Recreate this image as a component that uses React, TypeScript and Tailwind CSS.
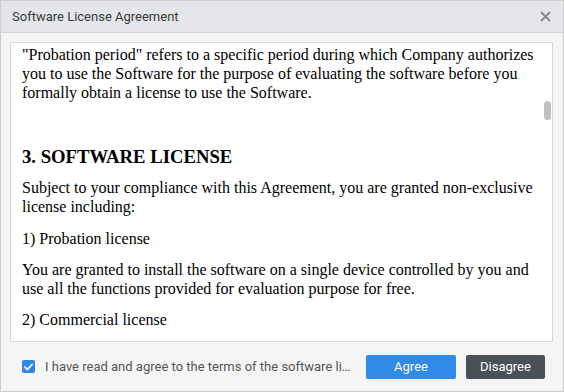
import React from "react";

const sans = "font-['Roboto','Noto_Sans',sans-serif]";

// Check mark for the agreement checkbox
const CheckIcon = () => (
  <svg width="9" height="8" viewBox="0 0 9 8" fill="none">
    <path d="M1 4.2L3.4 6.5L8 1.5" stroke="white" strokeWidth="1.8" strokeLinecap="round" strokeLinejoin="round" />
  </svg>
);

const CloseIcon = () => (
  <svg width="11" height="11" viewBox="0 0 11 11" fill="none">
    <path d="M1 1L10 10M10 1L1 10" stroke="#8a8a8a" strokeWidth="1.8" />
  </svg>
);

export default function App() {
  return (
    <div className="w-[564px] h-[392px] flex flex-col border border-[#cdcdcd] bg-[#f5f5f5] overflow-hidden">
      {/* Title bar */}
      <div className="h-[32px] shrink-0 flex items-center justify-between pl-[11px] pr-[12px] bg-[#e4e6ea] border-b border-[#d4d4d4]">
        <span className={`${sans} text-[13px] text-[#3a3a3a]`}>Software License Agreement</span>
        <CloseIcon />
      </div>

      {/* License text */}
      <div className="relative mt-[9px] ml-[9px] mr-[10px] h-[300px] shrink-0 bg-white border border-[#d9d9d9] overflow-hidden">
        <div className="pl-[11px] pr-[16px] pt-[2px] font-['Liberation_Serif','Times_New_Roman',serif] text-[16px] leading-[19px] text-black">
          <p>
            "Probation period" refers to a specific period during which Company authorizes you to use the Software
            for the purpose of evaluating the software before you formally obtain a license to use the Software.
          </p>
          <h2 className="mt-[44px] text-[18.7px] leading-[22px] font-bold">3. SOFTWARE LICENSE</h2>
          <p className="mt-[10px]">
            Subject to your compliance with this Agreement, you are granted non-exclusive license including:
          </p>
          <p className="mt-[13px]">1) Probation license</p>
          <p className="mt-[12px]">
            You are granted to install the software on a single device controlled by you and use all the functions
            provided for evaluation purpose for free.
          </p>
          <p className="mt-[12px]">2) Commercial license</p>
        </div>
        {/* scrollbar thumb */}
        <div className="absolute left-[533px] top-[58px] w-[7px] h-[19px] rounded-full bg-[#c1c1c1]" />
      </div>

      {/* Footer */}
      <div className="flex-1 flex items-center pl-[21px] pr-[18px]">
        <div className="w-[13px] h-[13px] rounded-[2px] bg-[#2f87e6] flex items-center justify-center shrink-0">
          <CheckIcon />
        </div>
        <span className={`${sans} ml-[10px] w-[312px] truncate text-[13px] text-[#555]`}>
          I have read and agree to the terms of the software license agreement
        </span>
        <button className={`${sans} ml-[9px] w-[90px] h-[24px] rounded-[2px] bg-[#2f8ae8] text-white text-[13px]`}>
          Agree
        </button>
        <button className={`${sans} ml-[10px] w-[79px] h-[24px] rounded-[2px] bg-[#4a5058] text-white text-[13px]`}>
          Disagree
        </button>
      </div>
    </div>
  );
}
